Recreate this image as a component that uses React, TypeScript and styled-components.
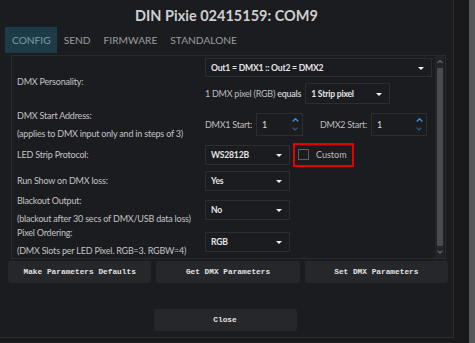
import styled, { createGlobalStyle } from "styled-components";

const GlobalStyle = createGlobalStyle`
    html, body {
        margin: 0;
        padding: 0;
        background: #1b1c1e;
    }
    body {
        font-family: "Lato", "Open Sans", sans-serif;
    }
`;

interface ParamRow {
    label: string;
    sub?: string;
}

function Chevron({ up, color, size = 6 }: { up?: boolean; color: string; size?: number }) {
    return (
        <svg width={size} height={size * 0.6} viewBox="0 0 10 6">
            <path d={up ? "M1 5 L5 1 L9 5" : "M1 1 L5 5 L9 1"} fill="none" stroke={color} strokeWidth="1.8" />
        </svg>
    );
}

function SpinBox({ width }: { width: number }) {
    return (
        <Spin $width={width}>
            <span>1</span>
            <SpinArrows>
                <Chevron up color="#3f93d8" size={7} />
                <Chevron color="#2d5f86" size={6} />
            </SpinArrows>
        </Spin>
    );
}

function Dropdown({ text, width, height }: { text: string; width: number; height?: number }) {
    return (
        <Select $width={width} $height={height}>
            <span>{text}</span>
            <Arrow />
        </Select>
    );
}

export default function App() {
    return (
        <Page>
            <GlobalStyle />
            <Window>
                <Title>DIN Pixie 02415159: COM9</Title>
                <Tabs>
                    <Tab $active>CONFIG</Tab>
                    <Tab>SEND</Tab>
                    <Tab>FIRMWARE</Tab>
                    <Tab>STANDALONE</Tab>
                </Tabs>
                <Panel>
                    <Content>
                        <Row $height={52}>
                            <Label label="DMX Personality:" />
                            <Controls>
                                <Dropdown text="Out1 = DMX1 :: Out2 = DMX2" width={227} height={19} />
                                <Inline>
                                    <Muted>1 DMX pixel (RGB) <b>equals</b></Muted>
                                    <Dropdown text="1 Strip pixel" width={85} height={21} />
                                </Inline>
                            </Controls>
                        </Row>
                        <Row $height={33}>
                            <Label label="DMX Start Address:" sub="(applies to DMX input only and in steps of 3)" />
                            <Inline>
                                <Muted>DMX1 Start:</Muted>
                                <SpinBox width={47} />
                                <Muted $gap={17}>DMX2 Start:</Muted>
                                <SpinBox width={56} />
                            </Inline>
                        </Row>
                        <Row $height={27}>
                            <Label label="LED Strip Protocol:" />
                            <Inline>
                                <Dropdown text="WS2812B" width={85} />
                                <Highlight>
                                    <Check />
                                    <span>Custom</span>
                                </Highlight>
                            </Inline>
                        </Row>
                        <Row $height={25}>
                            <Label label="Run Show on DMX loss:" />
                            <Dropdown text="Yes" width={85} />
                        </Row>
                        <Row $height={33}>
                            <Label label="Blackout Output:" sub="(blackout after 30 secs of DMX/USB data loss)" />
                            <Dropdown text="No" width={85} />
                        </Row>
                        <Row $height={32}>
                            <Label label="Pixel Ordering:" sub="(DMX Slots per LED Pixel. RGB=3. RGBW=4)" />
                            <Dropdown text="RGB" width={85} />
                        </Row>
                    </Content>
                    <Scrollbar>
                        <ScrollEnd>
                            <Chevron up color="#6a6b6f" size={6} />
                        </ScrollEnd>
                        <Thumb />
                        <ScrollEnd>
                            <Chevron color="#6a6b6f" size={6} />
                        </ScrollEnd>
                    </Scrollbar>
                </Panel>
                <ButtonRow>
                    <Button>Make Parameters Defaults</Button>
                    <Button>Get DMX Parameters</Button>
                    <Button>Set DMX Parameters</Button>
                </ButtonRow>
                <CloseRow>
                    <Button>Close</Button>
                </CloseRow>
            </Window>
            <Gutter />
            <OuterScroll />
        </Page>
    );
}

function Label({ label, sub }: ParamRow) {
    return (
        <LabelBlock>
            <div>{label}</div>
            {sub ? <div>{sub}</div> : null}
        </LabelBlock>
    );
}

const Page = styled.div`
    display: flex;
    width: 475px;
    height: 343px;
    overflow: hidden;
    background: #18191b;
`;

const Window = styled.div`
    width: 454px;
    height: 338px;
    display: flex;
    flex-direction: column;
    background: #1b1c1f;
    border-right: 1px solid #2b2c2f;
    border-bottom: 1px solid #2b2c2f;
    box-sizing: border-box;
`;

const Title = styled.div`
    height: 27px;
    line-height: 31px;
    text-align: center;
    font-size: 14.5px;
    font-weight: 700;
    color: #cfcfd0;
`;

const Tabs = styled.div`
    display: flex;
    height: 26px;
    padding-left: 5px;
`;

const Tab = styled.div<{ $active?: boolean }>`
    display: flex;
    align-items: center;
    padding: 0 6px 0 7px;
    font-size: 10.2px;
    color: ${({ $active }) => ($active ? "#7c9fab" : "#9b9c9e")};
    background: ${({ $active }) => ($active ? "#1e3c48" : "transparent")};
`;

const Panel = styled.div`
    display: flex;
    height: 204px;
    margin: 2px 7px 0 11px;
    border: 1px solid #2a2b2e;
    box-sizing: border-box;
`;

const Content = styled.div`
    flex: 1;
    display: flex;
    flex-direction: column;
`;

const Row = styled.div<{ $height: number }>`
    display: grid;
    grid-template-columns: 193px 1fr;
    align-items: center;
    height: ${({ $height }) => $height}px;
    white-space: nowrap;
`;

const LabelBlock = styled.div`
    display: flex;
    flex-direction: column;
    gap: 4px;
    padding-left: 5px;
    font-size: 9px;
    letter-spacing: -0.2px;
    line-height: 14px;
    color: #c3c3c5;
`;

const Controls = styled.div`
    display: flex;
    flex-direction: column;
    gap: 6px;
    height: 100%;
    padding-top: 2px;
    box-sizing: border-box;
`;

const Inline = styled.div`
    display: flex;
    align-items: center;
`;

const Muted = styled.span<{ $gap?: number }>`
    font-size: 9px;
    letter-spacing: -0.25px;
    color: #bdbdbf;
    margin-left: ${({ $gap }) => $gap ?? 0}px;
    margin-right: 4px;

    b {
        font-weight: 600;
        color: #d0d0d2;
    }
`;

const Select = styled.div<{ $width: number; $height?: number }>`
    position: relative;
    display: flex;
    align-items: center;
    width: ${({ $width }) => $width}px;
    height: ${({ $height }) => $height ?? 20}px;
    padding-left: 5px;
    box-sizing: border-box;
    border: 1px solid #2c2d31;
    font-size: 8.6px;
    letter-spacing: -0.2px;
    font-weight: 700;
    color: #e4e4e6;
`;

const Arrow = styled.span`
    position: absolute;
    right: 7px;
    top: 50%;
    margin-top: -1px;
    border-left: 3px solid transparent;
    border-right: 3px solid transparent;
    border-top: 3px solid #f0f0f0;
`;

const Spin = styled.div<{ $width: number }>`
    position: relative;
    display: flex;
    align-items: center;
    width: ${({ $width }) => $width}px;
    height: 23px;
    padding-left: 5px;
    box-sizing: border-box;
    border: 1px solid #2c2d31;
    font-size: 9px;
    color: #dcdcde;
`;

const SpinArrows = styled.div`
    position: absolute;
    right: 3px;
    top: 4px;
    bottom: 4px;
    display: flex;
    flex-direction: column;
    justify-content: space-between;
    align-items: center;
`;

const Highlight = styled.div`
    display: flex;
    align-items: center;
    gap: 7px;
    width: 61px;
    height: 24px;
    margin-left: 3px;
    padding-left: 3px;
    box-sizing: border-box;
    border: 2.5px solid #e60000;
    font-size: 9px;
    color: #bcbcbe;
`;

const Check = styled.span`
    width: 11px;
    height: 11px;
    border: 1px solid #5c5d61;
    box-sizing: border-box;
`;

const Scrollbar = styled.div`
    width: 9px;
    margin: 0 1px 0 0;
    display: flex;
    flex-direction: column;
    align-items: center;
    background: #232427;
`;

const ScrollEnd = styled.div`
    height: 12px;
    display: flex;
    align-items: center;
    justify-content: center;
`;

const Thumb = styled.div`
    flex: 1;
    width: 6px;
    background: #4a4b4f;
    border-radius: 1px;
`;

const ButtonRow = styled.div`
    display: grid;
    grid-template-columns: repeat(3, 1fr);
    gap: 5px;
    margin: 2px 5px 0 8px;
`;

const Button = styled.div`
    display: flex;
    align-items: center;
    justify-content: center;
    height: 22px;
    border-radius: 3px;
    background: #26272a;
    font-family: "Liberation Mono", "DejaVu Sans Mono", monospace;
    font-size: 7.8px;
    font-weight: 700;
    color: #e2e2e4;
`;

const CloseRow = styled.div`
    display: grid;
    grid-template-columns: 143px;
    justify-content: center;
    margin-top: 26px;
    padding-right: 3px;
`;

const Gutter = styled.div`
    width: 15px;
    background: #19191b;
`;

const OuterScroll = styled.div`
    width: 6px;
    background: #56575b;
`;
